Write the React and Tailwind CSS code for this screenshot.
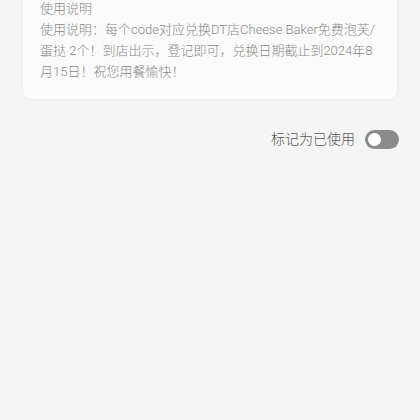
import React, { useState } from 'react';

const App = () => {
  const [used, setUsed] = useState(false);

  return (
    <div className="min-h-[420px] w-[420px] overflow-hidden bg-[#f5f5f5]" style={{ fontFamily: 'Roboto, "Noto Sans CJK SC", sans-serif' }}>
      {/* instructions card */}
      <div className="mx-[23px] -mt-[18px] rounded-lg bg-[#fbfbfb] px-[17px] pt-[16px] pb-[17px] shadow-[0_1px_3px_rgba(0,0,0,0.06)]">
        <p className="text-[13px] font-light leading-[21px] text-[#888888]">使用说明</p>
        <p className="text-[13px] font-light leading-[21px] text-[#888888]">
          使用说明：每个code对应兑换DT店Cheese Baker免费泡芙/蛋挞 2个！到店出示，登记即可，兑换日期截止到2024年8月15日！祝您用餐愉快！
        </p>
      </div>

      {/* mark as used */}
      <div className="mt-[31px] flex items-center justify-end gap-[10px] pr-[21px]">
        <span className="text-[14px] font-light leading-[19px] text-[#555555]">标记为已使用</span>
        <button
          onClick={() => setUsed(!used)}
          className={`relative h-[19px] w-[34px] rounded-full ${used ? 'bg-[#4caf50]' : 'bg-[#8c8c8c]'}`}
        >
          <span className={`absolute top-[3px] h-[13px] w-[13px] rounded-full bg-white ${used ? 'left-[18px]' : 'left-[3px]'}`} />
        </button>
      </div>
    </div>
  );
};

export default App;
